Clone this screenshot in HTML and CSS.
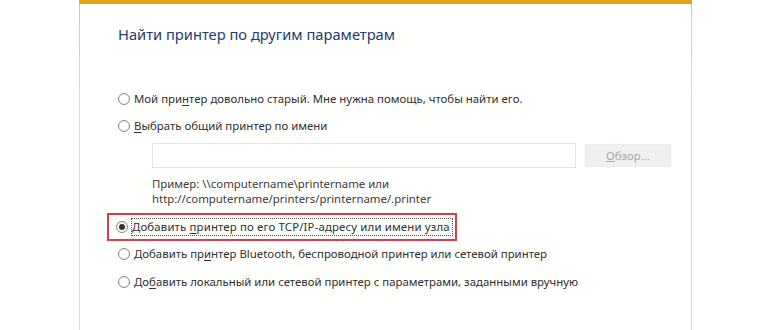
FILE: index.html
```html
<!DOCTYPE html>
<html lang="ru">
<head>
<meta charset="utf-8">
<title>Найти принтер</title>
<link rel="stylesheet" href="styles.css">
</head>
<body>
<div class="frame">
  <div class="topbar"></div>
  <div class="window">
    <h1 class="title">Найти принтер по другим параметрам</h1>
    <div class="options">
      <label class="row"><span class="radio"></span><span class="text">Мой при<u>н</u>тер довольно старый. Мне нужна помощь, чтобы найти его.</span></label>
      <label class="row row-gap"><span class="radio"></span><span class="text"><u>В</u>ыбрать общий принтер по имени</span></label>
      <div class="share">
        <div class="field-line">
          <div class="input"></div>
          <div class="button"><u>О</u>бзор...</div>
        </div>
        <div class="example"><div>Пример: \\computername\printername или</div><div>http://computername/printers/printername/.printer</div></div>
      </div>
      <div class="row row-sel">
        <span class="highlight"><span class="radio checked"></span><span class="text focus">Добавить <u>п</u>ринтер по его TCP/IP-адресу или имени узла</span></span>
      </div>
      <label class="row row-gap"><span class="radio"></span><span class="text">Добавить пр<u>и</u>нтер Bluetooth, беспроводной принтер или сетевой принтер</span></label>
      <label class="row row-gap2"><span class="radio"></span><span class="text">До<u>б</u>авить локальный или сетевой принтер с параметрами, заданными вручную</span></label>
    </div>
  </div>
</div>
</body>
</html>
```
FILE: styles.css
```css
html, body {
  margin: 0;
  padding: 0;
  background: #ffffff;
}
body {
  font-family: "Noto Sans", "Open Sans", sans-serif;
  color: #2b2b2b;
  overflow: hidden;
  height: 330px;
}
.frame {
  margin-left: 79px;
  width: 613px;
}
.topbar {
  height: 4px;
  background: #e8a416;
}
.window {
  height: 326px;
  box-sizing: border-box;
  border-left: 1px solid #e8dccb;
  border-right: 1px solid #e8dccb;
  border-image: linear-gradient(#f6c948, #eedcb8 30%, #e6dbce) 1;
  border-top: 0;
  border-bottom: 0;
  background: #fffffe;
  padding-left: 38px;
}
.title {
  margin: 0;
  padding-top: 20px;
  font-size: 14.7px;
  line-height: 20px;
  font-weight: normal;
  color: #1d3b72;
}
.options {
  margin-top: 46px;
  display: flex;
  flex-direction: column;
  align-items: flex-start;
}
.row {
  display: flex;
  align-items: center;
  height: 18px;
  font-size: 11.4px;
  line-height: 18px;
  color: #2e2e2e;
}
.row-gap { margin-top: 9px; }
.row-gap2 { margin-top: 10px; }
.row-sel { margin-top: 12px; }
.radio {
  box-sizing: border-box;
  width: 12px;
  height: 12px;
  border: 1px solid #858585;
  border-radius: 50%;
  background: radial-gradient(circle, #ffffff 40%, #ececec 100%);
  margin-right: 4px;
  display: flex;
  align-items: center;
  justify-content: center;
  flex: none;
}
.radio.checked::after {
  content: "";
  width: 6px;
  height: 6px;
  border-radius: 50%;
  background: #333333;
}
.text u {
  text-decoration: underline;
  text-underline-offset: 2px;
}
.highlight {
  display: flex;
  align-items: center;
  border: 2px solid #dc3a4e;
  margin-left: -11px;
  padding: 4px 3px 4px 7px;
  margin-top: -6px;
  margin-bottom: -6px;
}
.focus {
  outline: 1px dotted #555555;
  line-height: 16px;
  letter-spacing: 0.15px;
  padding-right: 2px;
}
.share {
  margin-left: 34px;
  margin-top: 8px;
}
.field-line {
  display: flex;
  align-items: center;
  gap: 9px;
}
.input {
  width: 424px;
  height: 25px;
  box-sizing: border-box;
  border: 1px solid #e3e3e3;
  background: #ffffff;
}
.button {
  width: 86px;
  height: 23px;
  box-sizing: border-box;
  background: #f0f0f0;
  border: 1px solid #ececec;
  color: #a8a8a8;
  font-size: 11.4px;
  line-height: 21px;
  text-align: center;
}
.example {
  margin-top: 8px;
  font-size: 11.4px;
  line-height: 15px;
  color: #3a3a3a;
}
```
